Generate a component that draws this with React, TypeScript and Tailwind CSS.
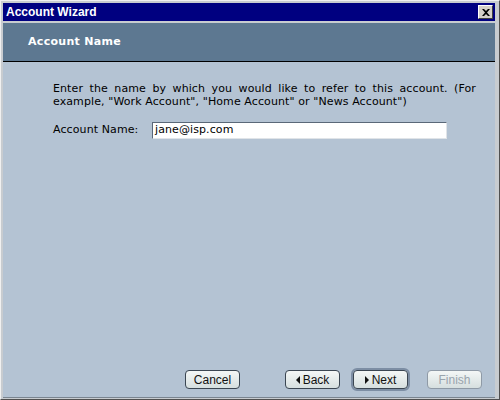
const Btn = ({ label, arrow, disabled, focused }: { label: string; arrow?: "left" | "right"; disabled?: boolean; focused?: boolean }) => {
    const inner = (
        <div
            className={`flex items-center justify-center h-[19px] w-[55px] rounded-[4px] border bg-gradient-to-b from-[#f4f7f6] to-[#d6dfdf] text-[12px] ${
                disabled ? "border-[#8f9aa6] text-[#9aa4ad]" : "border-[#3b4652] text-[#111]"
            }`}
            style={{ fontFamily: '"Liberation Sans", Arial, sans-serif' }}
        >
            {arrow === "left" && (
                <svg width="5" height="8" viewBox="0 0 5 8" className="mr-[2px]">
                    <path d="M4 0 L0 4 L4 8 Z" fill="#111" />
                </svg>
            )}
            {arrow === "right" && (
                <svg width="5" height="8" viewBox="0 0 5 8" className="mr-[2px]">
                    <path d="M0 0 L4 4 L0 8 Z" fill="#111" />
                </svg>
            )}
            <span>{label}</span>
        </div>
    );
    if (focused) {
        return <div className="rounded-[6px] border-2 border-[#7d8ea4]">{inner}</div>;
    }
    return inner;
};

export default function App() {
    return (
        <div className="w-[500px] h-[400px] bg-[#c8ccd0] border-t border-l border-[#f0f0f0] border-r border-b border-r-[#505050] border-b-[#505050] pt-[2px] pl-[2px] pr-[4px] pb-[1px] flex flex-col">
            {/* title bar */}
            <div className="h-[18px] bg-[#000080] flex items-center justify-between pl-[3px] pr-[2px]">
                <span className="text-white font-bold text-[12px]" style={{ fontFamily: '"Liberation Sans", Arial, sans-serif' }}>
                    Account Wizard
                </span>
                <div className="w-[15px] h-[14px] bg-[#d4d0c8] border border-t-white border-l-white border-r-[#404040] border-b-[#404040] flex items-center justify-center">
                    <svg width="8" height="7" viewBox="0 0 8 7">
                        <path d="M0 0 L2 0 L4 2 L6 0 L8 0 L5 3.5 L8 7 L6 7 L4 5 L2 7 L0 7 L3 3.5 Z" fill="#000" />
                    </svg>
                </div>
            </div>
            <div className="h-[2px] bg-[#c8ccd0]" />
            {/* header band */}
            <div className="h-[39px] bg-[#5d7891] border-b border-black flex items-center pl-[25px]">
                <span className="text-white font-bold text-[11px] tracking-[0.3px]" style={{ fontFamily: '"DejaVu Sans", Verdana, sans-serif' }}>
                    Account Name
                </span>
            </div>
            {/* body */}
            <div className="flex-1 bg-[#b4c3d3] flex flex-col border-b border-[#7a8590]" style={{ fontFamily: '"DejaVu Sans", Verdana, sans-serif' }}>
                <div className="flex-1 pl-[50px] pt-[20px]">
                    <p className="w-[423px] text-justify text-[11px] leading-[13px] text-black tracking-[0.1px]">
                        Enter the name by which you would like to refer to this account. (For example, "Work Account", "Home Account" or "News Account")
                    </p>
                    <div className="flex items-center mt-[14px]">
                        <span className="text-[11px] text-black w-[99px] tracking-[0.1px]">Account Name:</span>
                        <div className="w-[295px] h-[17px] bg-white border-t border-l border-t-[#5a6878] border-l-[#5a6878] border-b border-r border-b-[#e0e4e8] border-r-[#e0e4e8] flex items-center pl-[2px] text-[11px] text-black tracking-[0.1px]">
                            jane@isp.com
                        </div>
                    </div>
                </div>
                <div className="flex items-center pl-[182px] pb-[6px]">
                    <Btn label="Cancel" />
                    <div className="ml-[45px]">
                        <Btn label="Back" arrow="left" />
                    </div>
                    <div className="ml-[11px]">
                        <Btn label="Next" arrow="right" focused />
                    </div>
                    <div className="ml-[17px]">
                        <Btn label="Finish" disabled />
                    </div>
                </div>
            </div>
        </div>
    );
}
